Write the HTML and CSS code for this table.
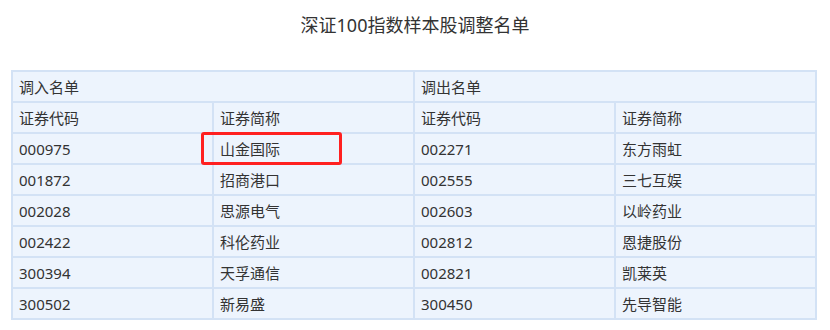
FILE: index.html
```html
<!DOCTYPE html>
<html lang="zh-CN">
<head>
<meta charset="utf-8">
<title>深证100指数样本股调整名单</title>
<link rel="stylesheet" href="styles.css">
</head>
<body>
<h1 class="title">深证100指数样本股调整名单</h1>
<table class="list">
  <colgroup><col class="c"><col class="c"><col class="c"><col class="c"></colgroup>
  <tr><td colspan="2">调入名单</td><td colspan="2">调出名单</td></tr>
  <tr><td>证券代码</td><td>证券简称</td><td>证券代码</td><td>证券简称</td></tr>
  <tr><td>000975</td><td class="marked"><span class="mark"></span>山金国际</td><td>002271</td><td>东方雨虹</td></tr>
  <tr><td>001872</td><td>招商港口</td><td>002555</td><td>三七互娱</td></tr>
  <tr><td>002028</td><td>思源电气</td><td>002603</td><td>以岭药业</td></tr>
  <tr><td>002422</td><td>科伦药业</td><td>002812</td><td>恩捷股份</td></tr>
  <tr><td>300394</td><td>天孚通信</td><td>002821</td><td>凯莱英</td></tr>
  <tr><td>300502</td><td>新易盛</td><td>300450</td><td>先导智能</td></tr>
</table>
</body>
</html>
```
FILE: styles.css
```css
html, body {
  margin: 0;
  padding: 0;
  background: #ffffff;
}
body {
  font-family: "Noto Sans", "Noto Sans CJK SC", sans-serif;
  color: #333333;
  width: 830px;
}
.title {
  margin: 0;
  height: 50px;
  line-height: 50px;
  font-size: 18px;
  font-weight: normal;
  text-align: center;
  color: #333333;
}
.list {
  margin: 20px 0 0 11px;
  width: 806px;
  border-collapse: collapse;
  table-layout: fixed;
  background: #edf4fd;
}
.list .c {
  width: 25%;
}
.list td {
  border: 2px solid #d3e2f5;
  height: 29px;
  padding: 1px 6px 0;
  font-size: 15px;
  line-height: 28px;
  box-sizing: border-box;
}
.marked {
  position: relative;
}
.mark {
  position: absolute;
  left: -13px;
  top: -2px;
  width: 141px;
  height: 33px;
  box-sizing: border-box;
  border: 3px solid #ff2020;
  border-radius: 3px;
}
```
